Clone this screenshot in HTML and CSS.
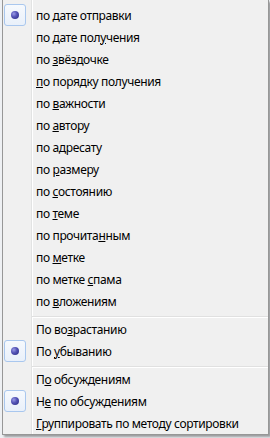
FILE: index.html
```html
<!DOCTYPE html>
<html lang="ru">
<head>
<meta charset="utf-8">
<link rel="stylesheet" href="styles.css">
</head>
<body>
<div class="menu">
  <div class="item checked"><span class="check"><span class="dot"></span></span><span class="label">по <u>д</u>ате отправки</span></div>
  <div class="item"><span class="check"></span><span class="label">по дате пол<u>у</u>чения</span></div>
  <div class="item"><span class="check"></span><span class="label">по <u>з</u>вёздочке</span></div>
  <div class="item"><span class="check"></span><span class="label"><u>п</u>о порядку получения</span></div>
  <div class="item"><span class="check"></span><span class="label">по <u>в</u>ажности</span></div>
  <div class="item"><span class="check"></span><span class="label">по <u>а</u>втору</span></div>
  <div class="item"><span class="check"></span><span class="label">по а<u>д</u>ресату</span></div>
  <div class="item"><span class="check"></span><span class="label">по <u>р</u>азмеру</span></div>
  <div class="item"><span class="check"></span><span class="label">по <u>с</u>остоянию</span></div>
  <div class="item"><span class="check"></span><span class="label">по <u>т</u>еме</span></div>
  <div class="item"><span class="check"></span><span class="label">по прочита<u>н</u>ным</span></div>
  <div class="item"><span class="check"></span><span class="label">по <u>м</u>етке</span></div>
  <div class="item"><span class="check"></span><span class="label">по метке <u>с</u>пама</span></div>
  <div class="item"><span class="check"></span><span class="label">по <u>в</u>ложениям</span></div>
  <div class="sep"><span class="line"></span></div>
  <div class="item"><span class="check"></span><span class="label">По во<u>з</u>растанию</span></div>
  <div class="item checked"><span class="check"><span class="dot"></span></span><span class="label">По <u>у</u>быванию</span></div>
  <div class="sep"><span class="line"></span></div>
  <div class="item"><span class="check"></span><span class="label">П<u>о</u> обсуждениям</span></div>
  <div class="item checked"><span class="check"><span class="dot"></span></span><span class="label">Н<u>е</u> по обсуждениям</span></div>
  <div class="item"><span class="check"></span><span class="label"><u>Г</u>руппировать по методу сортировки</span></div>
</div>
</body>
</html>
```
FILE: styles.css
```css
html, body {
  margin: 0;
  padding: 0;
}
body {
  width: 270px;
  height: 438px;
  background: #eef0f3;
  overflow: hidden;
  font-family: "Noto Sans", "Open Sans", sans-serif;
  font-size: 12px;
  letter-spacing: -0.35px;
  color: #000;
}
.menu {
  margin-left: 2px;
  width: 264px;
  padding: 4px 0 0 1px;
  box-sizing: content-box;
  border-left: 1px solid #979797;
  border-right: 1px solid #979797;
  border-bottom: 1px solid #979797;
  background:
    linear-gradient(to right, transparent 28px, #e2e3e3 28px, #e2e3e3 29px, #ffffff 29px, #ffffff 30px, transparent 30px),
    #f0f0f0;
  box-shadow: 2px 2px 2px rgba(0, 0, 0, 0.35);
  display: flex;
  flex-direction: column;
}
.item {
  height: 22px;
  display: flex;
  align-items: center;
}
.check {
  width: 22px;
  height: 22px;
  box-sizing: border-box;
  flex: none;
  display: flex;
  align-items: center;
  justify-content: center;
}
.checked .check {
  border: 1px solid #a9c7ee;
  border-radius: 3px;
  background: linear-gradient(#f6f9fd, #e9f0fa);
}
.dot {
  width: 8px;
  height: 8px;
  border-radius: 50%;
  background: radial-gradient(circle at 35% 35%, #9a9ae6 0, #5656b8 40%, #25257e 100%);
}
.label {
  margin-left: 10px;
  white-space: nowrap;
}
.label u {
  text-decoration: underline;
  text-underline-offset: 1px;
}
.sep {
  height: 6px;
  padding-top: 4px;
  box-sizing: border-box;
  padding-left: 28px;
  display: flex;
}
.sep .line {
  flex: 1;
  height: 0;
  border-top: 1px solid #e0e0e0;
  border-bottom: 1px solid #ffffff;
}
```
